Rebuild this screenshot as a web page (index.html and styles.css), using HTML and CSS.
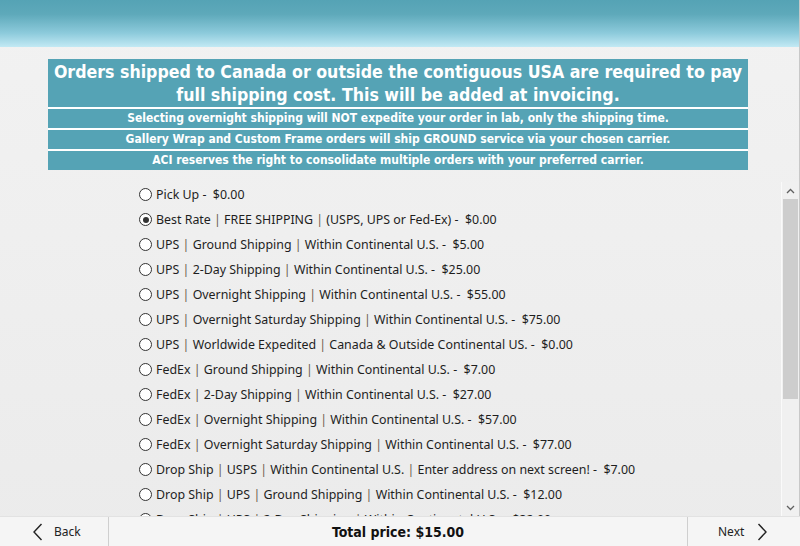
FILE: index.html
```html
<!DOCTYPE html>
<html>
<head>
<meta charset="utf-8">
<link rel="stylesheet" href="styles.css">
</head>
<body>
<div class="app">
  <header class="top"></header>
  <section class="notice">
    <div class="notice-main">Orders shipped to Canada or outside the contiguous USA are required to pay full shipping cost. This will be added at invoicing.</div>
    <div class="notice-line">Selecting overnight shipping will NOT expedite your order in lab, only the shipping time.</div>
    <div class="notice-line">Gallery Wrap and Custom Frame orders will ship GROUND service via your chosen carrier.</div>
    <div class="notice-line">ACI reserves the right to consolidate multiple orders with your preferred carrier.</div>
  </section>
  <section class="listwrap">
    <div class="list">
      <label class="opt"><span class="radio"></span>Pick Up -&nbsp; $0.00</label>
      <label class="opt"><span class="radio on"></span>Best Rate <i>|</i> FREE SHIPPING <i>|</i> (USPS, UPS or Fed-Ex) -&nbsp; $0.00</label>
      <label class="opt"><span class="radio"></span>UPS <i>|</i> Ground Shipping <i>|</i> Within Continental U.S. -&nbsp; $5.00</label>
      <label class="opt"><span class="radio"></span>UPS <i>|</i> 2-Day Shipping <i>|</i> Within Continental U.S. -&nbsp; $25.00</label>
      <label class="opt"><span class="radio"></span>UPS <i>|</i> Overnight Shipping <i>|</i> Within Continental U.S. -&nbsp; $55.00</label>
      <label class="opt"><span class="radio"></span>UPS <i>|</i> Overnight Saturday Shipping <i>|</i> Within Continental U.S. -&nbsp; $75.00</label>
      <label class="opt"><span class="radio"></span>UPS <i>|</i> Worldwide Expedited <i>|</i> Canada &amp; Outside Continental US. -&nbsp; $0.00</label>
      <label class="opt"><span class="radio"></span>FedEx <i>|</i> Ground Shipping <i>|</i> Within Continental U.S. -&nbsp; $7.00</label>
      <label class="opt"><span class="radio"></span>FedEx <i>|</i> 2-Day Shipping <i>|</i> Within Continental U.S. -&nbsp; $27.00</label>
      <label class="opt"><span class="radio"></span>FedEx <i>|</i> Overnight Shipping <i>|</i> Within Continental U.S. -&nbsp; $57.00</label>
      <label class="opt"><span class="radio"></span>FedEx <i>|</i> Overnight Saturday Shipping <i>|</i> Within Continental U.S. -&nbsp; $77.00</label>
      <label class="opt"><span class="radio"></span>Drop Ship <i>|</i> USPS <i>|</i> Within Continental U.S. <i>|</i> Enter address on next screen! -&nbsp; $7.00</label>
      <label class="opt"><span class="radio"></span>Drop Ship <i>|</i> UPS <i>|</i> Ground Shipping <i>|</i> Within Continental U.S. -&nbsp; $12.00</label>
      <label class="opt"><span class="radio"></span>Drop Ship <i>|</i> UPS <i>|</i> 2-Day Shipping <i>|</i> Within Continental U.S. -&nbsp; $32.00</label>
    </div>
    <div class="scrollbar">
      <div class="sb-btn"><svg width="9" height="6" viewBox="0 0 9 6"><path d="M1 5 L4.5 1.5 L8 5" fill="none" stroke="#606060" stroke-width="1.3"/></svg></div>
      <div class="sb-track"><div class="sb-thumb"></div></div>
      <div class="sb-btn"><svg width="9" height="6" viewBox="0 0 9 6"><path d="M1 1 L4.5 4.5 L8 1" fill="none" stroke="#606060" stroke-width="1.3"/></svg></div>
    </div>
  </section>
  <footer class="bottom">
    <div class="nav back"><svg width="11" height="18" viewBox="0 0 11 18"><path d="M9.5 1 L2 9 L9.5 17" fill="none" stroke="#222" stroke-width="1.4"/></svg><span>Back</span></div>
    <div class="total">Total price: $15.00</div>
    <div class="nav next"><span>Next</span><svg width="11" height="18" viewBox="0 0 11 18"><path d="M1.5 1 L9 9 L1.5 17" fill="none" stroke="#222" stroke-width="1.4"/></svg></div>
  </footer>
</div>
</body>
</html>
```

FILE: styles.css
```css
html, body {
  margin: 0;
  padding: 0;
}
body {
  width: 800px;
  height: 546px;
  overflow: hidden;
  background: #f2f2f2;
}
.app {
  width: 800px;
  height: 546px;
  display: flex;
  flex-direction: column;
  background: linear-gradient(#f2f2f2, #ebebeb);
  box-shadow: inset -1px 0 0 #c8c8c8;
}
.top {
  height: 47px;
  flex: none;
  background: linear-gradient(#55a3b5 0%, #5ea9ba 30%, #8ccadb 70%, #c2e9f4 100%);
  box-shadow: inset -1px 0 0 #c8c8c8;
}
.notice {
  flex: none;
  margin: 12px 0 0 48px;
  width: 700px;
  display: flex;
  flex-direction: column;
  gap: 2px;
  background: #ffffff;
  color: #ffffff;
  font-family: "DejaVu Sans Condensed", "DejaVu Sans", sans-serif;
  font-weight: bold;
  text-align: center;
}
.notice-main {
  background: #55a3b5;
  height: 48px;
  font-size: 17.6px;
  line-height: 23px;
  padding-top: 2px;
  box-sizing: border-box;
}
.notice-line {
  background: #55a3b5;
  height: 19px;
  font-size: 12px;
  line-height: 19px;
}
.listwrap {
  flex: 1;
  display: flex;
  margin-top: 10px;
  min-height: 0;
}
.list {
  flex: 1;
  overflow: hidden;
  padding: 2px 0 0 139px;
  font-family: "Noto Sans", "Open Sans", sans-serif;
  font-size: 12.4px;
  color: #1e1e1e;
}
.opt {
  display: flex;
  align-items: center;
  height: 25px;
  white-space: pre;
}
.opt i {
  font-style: normal;
  color: #6a5a4a;
}
.radio {
  width: 11px;
  height: 11px;
  border: 1px solid #333;
  border-radius: 50%;
  background: #fff;
  margin-right: 4px;
  flex: none;
  position: relative;
}
.radio.on::after {
  content: "";
  position: absolute;
  left: 2.5px;
  top: 2.5px;
  width: 6px;
  height: 6px;
  border-radius: 50%;
  background: #333;
}
.scrollbar {
  width: 17px;
  margin: 2px 1px 0 0;
  border-left: 1px solid #fafafa;
  background: #f0f0f0;
  display: flex;
  flex-direction: column;
}
.sb-btn {
  height: 17px;
  display: flex;
  align-items: center;
  justify-content: center;
}
.sb-track {
  flex: 1;
}
.sb-thumb {
  height: 200px;
  margin: 0 1px;
  background: #cdcdcd;
}
.bottom {
  flex: none;
  height: 30px;
  display: flex;
  background: #f5f5f5;
  border-top: 1px solid #e2e2e2;
  box-sizing: border-box;
  font-family: "DejaVu Sans Condensed", "DejaVu Sans", sans-serif;
}
.nav {
  display: flex;
  align-items: center;
  font-family: "Noto Sans", "Open Sans", sans-serif;
  font-size: 12px;
  color: #222;
}
.back {
  width: 109px;
  border-right: 1px solid #cfcfcf;
  padding-left: 32px;
  box-sizing: border-box;
  gap: 11px;
}
.next {
  width: 113px;
  border-left: 1px solid #cfcfcf;
  padding-left: 30px;
  box-sizing: border-box;
  gap: 13px;
}
.total {
  flex: 1;
  text-align: center;
  font-weight: bold;
  font-size: 14px;
  line-height: 31px;
  color: #111;
}
```
